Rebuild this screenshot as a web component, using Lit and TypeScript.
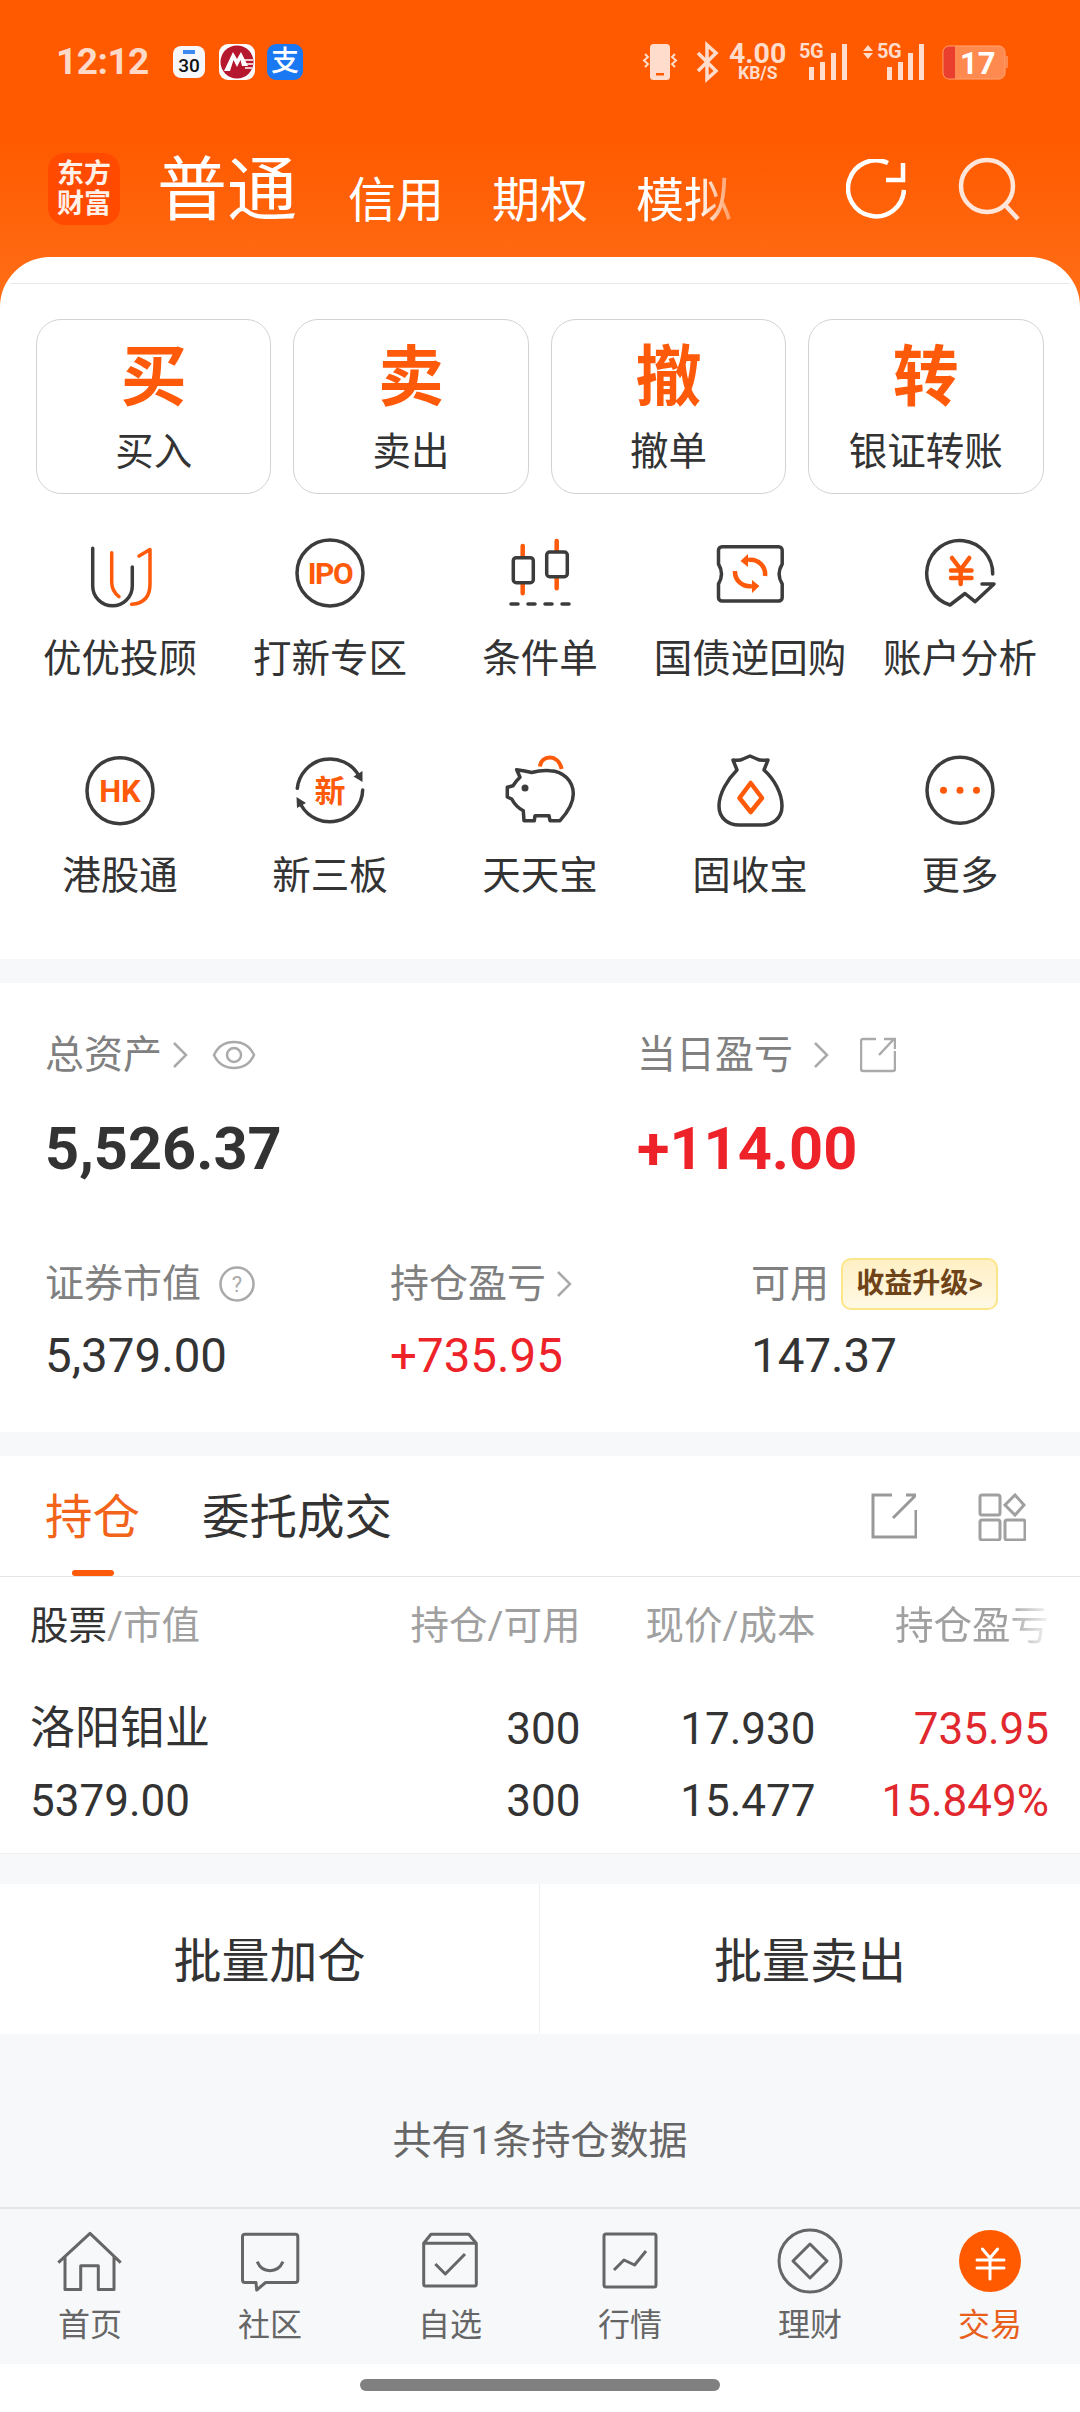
import { LitElement, html, css } from "lit";
import { customElement } from "lit/decorators.js";

const D = "#3c3c3c";
const O = "#ff5a0a";
const ic = (c: unknown) => html`<svg class="gi" viewBox="0 0 80 80" fill="none" stroke-width="3.5" stroke-linecap="round" stroke-linejoin="round">${c}</svg>`;
const gridItems = [
  { t: "优优投顾", i: ic(html`<svg><path stroke="${D}" d="M12.7 14.3V52a19.8 19.8 0 0 0 39.6 0V33"/><path stroke="${O}" d="M31.7 18.7V48q0 9 7.3 14.7M59 22l11-6.5V50q0 19-18.3 20.3"/></svg>`) },
  { t: "打新专区", i: ic(html`<svg><circle cx="40" cy="39" r="33" stroke="${D}"/><text class="it" x="40" y="50" font-size="30" letter-spacing="-1.5">IPO</text></svg>`) },
  { t: "条件单", i: ic(html`<svg><path stroke="${O}" stroke-width="4.5" d="M22.7 12V59.3M56.7 7V54.3"/><rect x="13.3" y="23.7" width="20" height="25" rx="3" fill="#fff" stroke="${D}"/><rect x="46.7" y="18" width="20.6" height="24.7" rx="3" fill="#fff" stroke="${D}"/><path stroke="${D}" d="M11 70h7M28 70h7M45 70h7M62 70h7"/></svg>`) },
  { t: "国债逆回购", i: ic(html`<svg><path stroke="${D}" d="M12 12.7H68.7a3.5 3.5 0 0 1 3.5 3.5V30Q66 40 72.2 50V63.5a3.5 3.5 0 0 1-3.5 3.5H12a3.5 3.5 0 0 1-3.5-3.5V50Q14.500 40 8.500 30V16.200a3.500 3.500 0 0 1 3.500-3.500Z"/><path stroke="${O}" stroke-width="4.500" stroke-linecap="butt" d="M38 26A14.500 14.500 0 0 1 55 42M42 52A14.500 14.500 0 0 1 25 37"/><path fill="${O}" stroke="none" d="M30.500 27 38 20V33ZM49.500 52 42 46V59Z"/></svg>`) },
  { t: "账户分析", i: ic(html`<svg><path stroke="${D}" d="M72.700 40A33 33 0 1 0 30 71L45 59.500 55 67.700 74 50H62"/><path stroke="${O}" stroke-width="4.500" d="M32 24 40.700 35.500 49.300 24M31 36.500H51.500M31 44H51.500M40.700 36V50"/></svg>`) },
  { t: "港股通", i: ic(html`<svg><circle cx="40" cy="39.700" r="33" stroke="${D}"/><text class="it" x="40" y="51" font-size="31">HK</text></svg>`) },
  { t: "新三板", i: ic(html`<svg><path stroke="${D}" d="M7.300 37.300A33 33 0 0 1 69 25M72.700 39A33 33 0 0 1 11 54"/><path fill="${D}" stroke="none" d="M72.500 31 63.500 25.500 72.500 20ZM6.500 46 16 52 7 57Z"/><text class="it" x="40" y="51" font-size="31">新</text></svg>`) },
  { t: "天天宝", i: ic(html`<svg><path stroke="${O}" stroke-width="4" stroke-linecap="butt" d="M40 15.500C41 4 58 2 61.700 18"/><path stroke="${D}" d="M16.700 18.700Q25 20 31.700 21.500Q41 19 50 19.700C63 20 73.300 30 73.300 43Q73.300 55 60 69.700H50L49 64.700H35L34.300 69.700H24L23.300 59.700Q16 56 11.700 48L7.300 46V36.300L13 34.700Q16 30 20 26.300Z"/><circle cx="25" cy="37" r="3.500" fill="${D}" stroke="none"/></svg>`) },
  { t: "固收宝", i: ic(html`<svg><path stroke="${D}" d="M27 19 23 9Q30 10 33 8L40 5 47 8Q50 10 58 9L54 19C64 28 72 42 72 55 72 68 62 74 52 74H29C19 74 9 68 9 55 9 42 18 28 27 19Z"/><path stroke="${O}" stroke-width="4.500" d="M40.700 32 52 47 40.700 61 29.500 47Z"/></svg>`) },
  { t: "更多", i: ic(html`<svg><circle cx="40" cy="39.300" r="33" stroke="${D}"/><circle cx="23.500" cy="39.300" r="3.500" fill="${O}" stroke="none"/><circle cx="40" cy="39.300" r="3.500" fill="${O}" stroke="none"/><circle cx="56.500" cy="39.300" r="3.500" fill="${O}" stroke="none"/></svg>`) },
];

const ti = (c: unknown) => html`<svg class="ti" viewBox="0 0 80 80" fill="none" stroke="#666" stroke-width="3" stroke-linejoin="round">${c}</svg>`;
const tabs = [
  { t: "首页", i: ti(html`<svg><path d="M8.300 40.700 40 11.300 70.700 40.700M15 34.700V67.600H30.700V43.700H48.300V67.600H64V34.700"/></svg>`) },
  { t: "社区", i: ti(html`<svg><path d="M15 12.300H65.300A2.500 2.500 0 0 1 67.800 14.800V58A2.500 2.500 0 0 1 65.300 60.500H35.600L26.700 68 26 60.500H15A2.500 2.500 0 0 1 12.500 58V14.800A2.500 2.500 0 0 1 15 12.300Z"/><path d="M27.200 39.700Q31 48.700 40 48.700T53 39.700"/></svg>`) },
  { t: "自选", i: ti(html`<svg><path d="M13.700 21.300 21 12.300H58.700L66.300 21.300V62A2 2 0 0 1 64.300 64H15.700A2 2 0 0 1 13.700 62ZM13.700 21.300H66.300"/><path d="M25.300 42 35.300 52 55 32"/></svg>`) },
  { t: "行情", i: ti(html`<svg><rect x="14" y="12" width="52" height="53" rx="2"/><path d="M24 48 34 38 44.600 43 56 29"/></svg>`) },
  { t: "理财", i: ti(html`<svg><circle cx="40" cy="39" r="31"/><path d="M40 22 57 39 40 56 23 39Z"/></svg>`) },
  { t: "交易", on: true, i: ti(html`<svg><circle cx="40" cy="39" r="31" fill="#ff5a00" stroke="none"/><path stroke="#fff" stroke-linecap="round" d="M32.400 27 40 36 47.600 27M27 38H54M27 46H54M40 36V57"/></svg>`) },
];

const chev = html`<svg class="chev" viewBox="0 0 16 26" fill="none" stroke="#aaa" stroke-width="2.500"><path d="M2 1 14 13 2 25"/></svg>`;

@customElement("app-root")
export class AppRoot extends LitElement {
  static styles = css`
    :host { display: block; width: 1080px; height: 2412px; overflow: hidden; font-family: Roboto, "Noto Sans CJK SC", sans-serif; color: #333; background: #fff; }
    .page { background: linear-gradient(#ff5a00 0, #ff5a00 140px, #ff6f18 310px) top / 100% 310px no-repeat; }
    .head { height: 257px; }
    .status { height: 125px; padding: 40px 0 0 56px; display: flex; box-sizing: border-box; align-items: flex-start; }
    .time { font-size: 37px; font-weight: 700; color: #ffd9c8; line-height: 44px; letter-spacing: -0.5px; width: 117px; }
    .nt { width: 36px; height: 36px; margin: 4px 12px 0 0; flex: none; }
    .cal { width: 32px; height: 32px; margin: 6px 14px 0 0; background: #f5f7fa; border-radius: 8px; display: flex; flex-direction: column; align-items: center; font-size: 19px; line-height: 19px; color: #111; box-sizing: border-box; padding-top: 4px; font-weight: 500; }
    .cal i { display: block; width: 12px; height: 4px; background: #3d8bf0; margin-bottom: 2px; }
    .ali { background: #1a78f2; border-radius: 9px; color: #fff; font-size: 28px; line-height: 36px; text-align: center; font-weight: 500; }
    .sys { margin: -15px 70px 0 auto; width: 370px; height: 65px; flex: none; }
    .sys text { font-family: Roboto, sans-serif; font-weight: 700; }
    .nav { height: 100px; display: flex; align-items: flex-end; padding: 0 60px 0 48px; color: #fff; }
    .logo { width: 72px; height: 72px; border-radius: 17px; background: #ff4a00; display: flex; flex-direction: column; align-items: center; justify-content: center; font-size: 27px; line-height: 30px; font-weight: 700; color: #fff0e8; margin-right: 37px; flex: none; }
    .n0 { font-size: 70px; line-height: 70px; margin-right: 51px; margin-bottom: -1px; }
    .n1 { font-size: 48px; line-height: 48px; margin-right: 48px; }
    .fade { -webkit-mask-image: linear-gradient(90deg, #000 65%, rgba(0,0,0,.35) 100%); mask-image: linear-gradient(90deg, #000 65%, rgba(0,0,0,.35) 100%); margin-right: 0; }
    .re { width: 60px; height: 62px; margin: 0 52px 4px auto; flex: none; }
    .se { width: 62px; height: 64px; margin: 0 0 4px 0; flex: none; }
    .card { background: #fff; border-radius: 50px 50px 0 0; padding-top: 26px; height: 702px; box-sizing: border-box; }
    .hr { height: 1px; background: #e8e8e8; margin: 0 10px; }
    .btns { display: grid; grid-template-columns: repeat(4, 1fr); gap: 22px; padding: 35px 36.5px 0 36px; }
    .btn { height: 175px; box-sizing: border-box; border: 1.500px solid #d2d2d2; border-radius: 25px; text-align: center; padding-top: 27px; }
    .bc { font-size: 66px; line-height: 62px; font-weight: 700; color: #ff5a0a; }
    .bl { font-size: 38.500px; line-height: 44px; margin-top: 21px; color: #333; }
    .grid { display: grid; grid-template-columns: repeat(5, 210px); padding: 40px 0 0 15px; }
    .gc { height: 217px; display: flex; flex-direction: column; align-items: center; }
    .gi { width: 80px; height: 80px; flex: none; }
    .it { fill: #ff5a0a; stroke: none; font-weight: 700; text-anchor: middle; font-family: Roboto, "Noto Sans CJK SC", sans-serif; }
    .gl { font-size: 38.500px; line-height: 44px; margin-top: 23px; white-space: nowrap; color: #333; }
    .band { height: 24px; background: #f7f8fa; }
    .assets { height: 449px; box-sizing: border-box; padding: 50px 0 0 45px; }
    .rw { display: flex; }
    .c1 { width: 592px; }
    .c2 { width: 345px; }
    .c3 { width: 361px; }
    .lb { display: flex; align-items: center; font-size: 39px; line-height: 44px; color: #808080; white-space: nowrap; height: 44px; }
    .chev { width: 16px; height: 26px; margin-left: 10px; flex: none; }
    .chev.w { margin-left: 20px; }
    .eye { width: 44px; height: 30px; margin-left: 24px; flex: none; }
    .ext { width: 36px; height: 36px; margin-left: 31px; flex: none; }
    .q { width: 36px; height: 38px; margin-left: 18px; flex: none; }
    .val { font-size: 59.500px; line-height: 70px; font-weight: 700; margin-top: 37px; }
    .red { color: #ee2229; }
    .sm { font-size: 47.500px; line-height: 56px; margin-top: 22px; }
    .r2 { margin-top: 78px; }
    .badge { margin-left: 12px; width: 157px; height: 52px; box-sizing: border-box; border: 2px solid #fde68a; border-radius: 10px; background: linear-gradient(#fff0c4, #fff8e4); color: #6e4318; font-size: 28px; font-weight: 700; line-height: 48px; text-align: center; white-space: nowrap; }
    .tabs { height: 121px; box-sizing: border-box; border-bottom: 1px solid #e4e4e4; display: flex; padding: 0 0 0 45px; }
    .tab { display: flex; flex-direction: column; align-items: center; padding-top: 32px; font-size: 47.500px; line-height: 60px; margin-right: 62px; }
    .tab b { font-weight: 400; }
    .tab i { display: block; width: 42px; height: 6px; border-radius: 3px; margin-top: 22px; }
    .tab.on { color: #f2641a; }
    .tab.on i { background: #ff5a0a; }
    .tabs .a { width: 46px; height: 46px; margin: 37px 61px 0 auto; flex: none; }
    .tabs .b { width: 48px; height: 48px; margin: 37px 54px 0 0; flex: none; }
    .tbl { height: 277px; box-sizing: border-box; border-bottom: 1px solid #eeeff1; display: grid; grid-template-columns: 200px 350.5px 235px 233.5px; padding: 27px 0 0 30px; grid-auto-rows: min-content; }
    .th { font-size: 38.500px; line-height: 44px; color: #a0a0a0; text-align: right; white-space: nowrap; }
    .th.l { text-align: left; }
    .th.l span { color: #333; }
    .th.m { -webkit-mask-image: linear-gradient(90deg, #000 72%, rgba(0,0,0,.12) 100%); mask-image: linear-gradient(90deg, #000 72%, rgba(0,0,0,.12) 100%); justify-self: end; }
    .td { font-size: 44px; line-height: 50px; text-align: right; white-space: nowrap; margin-top: 22px; }
    .td.f { margin-top: 56px; }
    .td.l { text-align: left; }
    .td.n { font-size: 45px; }
    .td.r { color: #e0282e; }
    .gap { height: 30px; background: #f7f8fa; }
    .bat { height: 150px; display: flex; }
    .bat div { flex: 1; display: flex; align-items: center; justify-content: center; font-size: 48px; padding-bottom: 4px; box-sizing: border-box; }
    .bat div:first-child { flex: none; width: 539px; }
    .bat div + div { border-left: 1px solid #eeeff1; }
    .foot { height: 173px; box-sizing: border-box; background: #f7f8fa; padding-top: 85px; text-align: center; font-size: 39px; line-height: 44px; color: #666; }
    .bar { height: 157px; box-sizing: border-box; border-top: 2px solid #e4e5e8; background: #f7f8fa; display: grid; grid-template-columns: repeat(6, 1fr); padding-top: 13px; }
    .tc { display: flex; flex-direction: column; align-items: center; }
    .ti { width: 80px; height: 80px; }
    .tl { font-size: 32px; line-height: 36px; margin-top: 5px; color: #666; }
    .tc.on .tl { color: #e8601c; }
    .homebar { height: 48px; box-sizing: border-box; padding-top: 15px; display: flex; justify-content: center; }
    .homebar i { display: block; width: 360px; height: 12px; border-radius: 6px; background: #808080; }
  `;

  render() {
    return html`<div class="page">
      <div class="head">
        <div class="status">
          <div class="time">12:12</div>
          <div class="cal"><i></i>30</div>
          <svg class="nt" viewBox="0 0 36 36"><rect width="36" height="36" rx="9" fill="#fff"/><circle cx="18" cy="18" r="16.500" fill="#b5172f"/><path fill="#fff" d="M5 27 14 8 18 15 22 8 29 22H23L21.500 16 18 23 14.500 16 11 27Z"/><path stroke="#fff" stroke-width="1.500" d="M24 16H34M25 20H34M26 24H33"/></svg>
          <div class="nt ali">支</div>
          <svg class="sys" viewBox="640 25 370 65">
            <g fill="#ffdccb">
              <rect x="650" y="44" width="20" height="36" rx="3.500"/>
              <rect x="656" y="73" width="8" height="2.500" fill="#ff5a00"/>
              <path stroke="#ffdccb" stroke-width="2" fill="none" d="M645 54l3 3-4 3.500 4 3.500-3 3M675 54l-3 3 4 3.500-4 3.500 3 3"/>
              <text x="729" y="63" font-size="28.500">4.00</text>
              <text x="738" y="79" font-size="17.500">KB/S</text>
              <text x="799" y="58" font-size="20" letter-spacing="-0.500">5G</text>
              <rect x="809" y="67" width="5" height="13"/><rect x="820" y="62" width="5" height="18"/><rect x="831" y="53" width="5" height="27"/><rect x="842" y="44" width="5" height="36"/>
              <path d="M863 51 868 45 873 51ZM863 53 868 59 873 53Z"/>
              <text x="877" y="58" font-size="20" letter-spacing="-0.500">5G</text>
              <rect x="887" y="67" width="5" height="13"/><rect x="898" y="62" width="5" height="18"/><rect x="908" y="53" width="5" height="27"/><rect x="919" y="44" width="5" height="36"/>
            </g>
            <path fill="none" stroke="#ffdccb" stroke-width="3.500" d="M698 53 716 71 707 79V45L716 53 698 71"/>
            <rect x="943" y="46" width="62" height="33" rx="6" fill="#ff8a50" stroke="#ffa476" stroke-width="1"/>
            <path fill="#ea3f2f" d="M949 46.500H955V78.500H949A5.500 5.500 0 0 1 943.500 73V52A5.500 5.500 0 0 1 949 46.500Z"/>
            <rect x="1005" y="56" width="3" height="12" rx="1" fill="#ff8a50"/>
            <text x="960" y="74" font-size="31" fill="#fff">17</text>
          </svg>
        </div>
        <div class="nav">
          <div class="logo"><span>东方</span><span>财富</span></div>
          <div class="n0">普通</div>
          <div class="n1">信用</div>
          <div class="n1">期权</div>
          <div class="n1 fade">模拟</div>
          <svg class="re" viewBox="0 0 60 62" fill="none" stroke="#fff" stroke-width="4.500"><path d="M42 4A28 28 0 1 0 58 31"/><path d="M57 4V21H40"/></svg>
          <svg class="se" viewBox="0 0 62 64" fill="none" stroke="#ffe6da" stroke-width="4.500"><circle cx="29" cy="29" r="26"/><path d="M48 49 60 62"/></svg>
        </div>
      </div>

      <div class="card">
        <div class="hr"></div>
        <div class="btns">
          ${[["买", "买入"], ["卖", "卖出"], ["撤", "撤单"], ["转", "银证转账"]].map(
            ([c, l]) => html`<div class="btn"><div class="bc">${c}</div><div class="bl">${l}</div></div>`)}
        </div>
        <div class="grid">
          ${gridItems.map((g) => html`<div class="gc">${g.i}<div class="gl">${g.t}</div></div>`)}
        </div>
      </div>
      <div class="band"></div>

      <div class="assets">
        <div class="rw">
          <div class="c1">
            <div class="lb">总资产${chev}
              <svg class="eye" viewBox="0 0 44 30" fill="none" stroke="#aaa" stroke-width="2.500"><path d="M2 15Q8 2 22 2T42 15Q36 28 22 28T2 15Z"/><circle cx="22" cy="15" r="7"/></svg>
            </div>
            <div class="val">5,526.37</div>
          </div>
          <div>
            <div class="lb">当日盈亏
              <svg class="chev w" viewBox="0 0 16 26" fill="none" stroke="#aaa" stroke-width="2.500"><path d="M2 1 14 13 2 25"/></svg>
              <svg class="ext" viewBox="0 0 36 36" fill="none" stroke="#aaa" stroke-width="2.500"><path d="M16 2H3A2 2 0 0 0 1 4V32A2 2 0 0 0 3 34H33A2 2 0 0 0 35 32V14M19 18 34 2M24 2H35V12"/></svg>
            </div>
            <div class="val red">+114.00</div>
          </div>
        </div>
        <div class="rw r2">
          <div class="c2">
            <div class="lb">证券市值
              <svg class="q" viewBox="0 0 36 38"><circle cx="18" cy="19" r="16.500" fill="none" stroke="#aaa" stroke-width="2.500"/><text x="18" y="27" font-size="22" text-anchor="middle" fill="#aaa">?</text></svg>
            </div>
            <div class="sm">5,379.00</div>
          </div>
          <div class="c3">
            <div class="lb">持仓盈亏${chev}</div>
            <div class="sm red">+735.95</div>
          </div>
          <div>
            <div class="lb">可用<div class="badge">收益升级&gt;</div></div>
            <div class="sm">147.37</div>
          </div>
        </div>
      </div>
      <div class="band"></div>

      <div class="tabs">
        <div class="tab on"><b>持仓</b><i></i></div>
        <div class="tab"><b>委托成交</b><i></i></div>
        <svg class="a" viewBox="0 0 46 46" fill="none" stroke="#999" stroke-width="3"><path d="M21 2H2V44H45V17M22 25 44 3M35 2H45"/></svg>
        <svg class="b" viewBox="0 0 48 48" fill="none" stroke="#a0a0a0" stroke-width="3"><rect x="2" y="2" width="20" height="20" rx="2"/><path d="M37 2 46 12 37 22 27 12Z"/><rect x="2" y="27" width="20" height="20" rx="2"/><rect x="27" y="27" width="20" height="20" rx="2"/></svg>
      </div>
      <div class="tbl">
        <div class="th l"><span>股票</span>/市值</div><div class="th">持仓/可用</div><div class="th">现价/成本</div><div class="th m">持仓盈亏</div>
        <div class="td f l n">洛阳钼业</div><div class="td f">300</div><div class="td f">17.930</div><div class="td f r">735.95</div>
        <div class="td l">5379.00</div><div class="td">300</div><div class="td">15.477</div><div class="td r">15.849%</div>
      </div>
      <div class="gap"></div>
      <div class="bat"><div>批量加仓</div><div>批量卖出</div></div>
      <div class="foot">共有1条持仓数据</div>
      <div class="bar">
        ${tabs.map((t) => html`<div class="tc ${t.on ? "on" : ""}">${t.i}<div class="tl">${t.t}</div></div>`)}
      </div>
      <div class="homebar"><i></i></div>
    </div>`;
  }
}
